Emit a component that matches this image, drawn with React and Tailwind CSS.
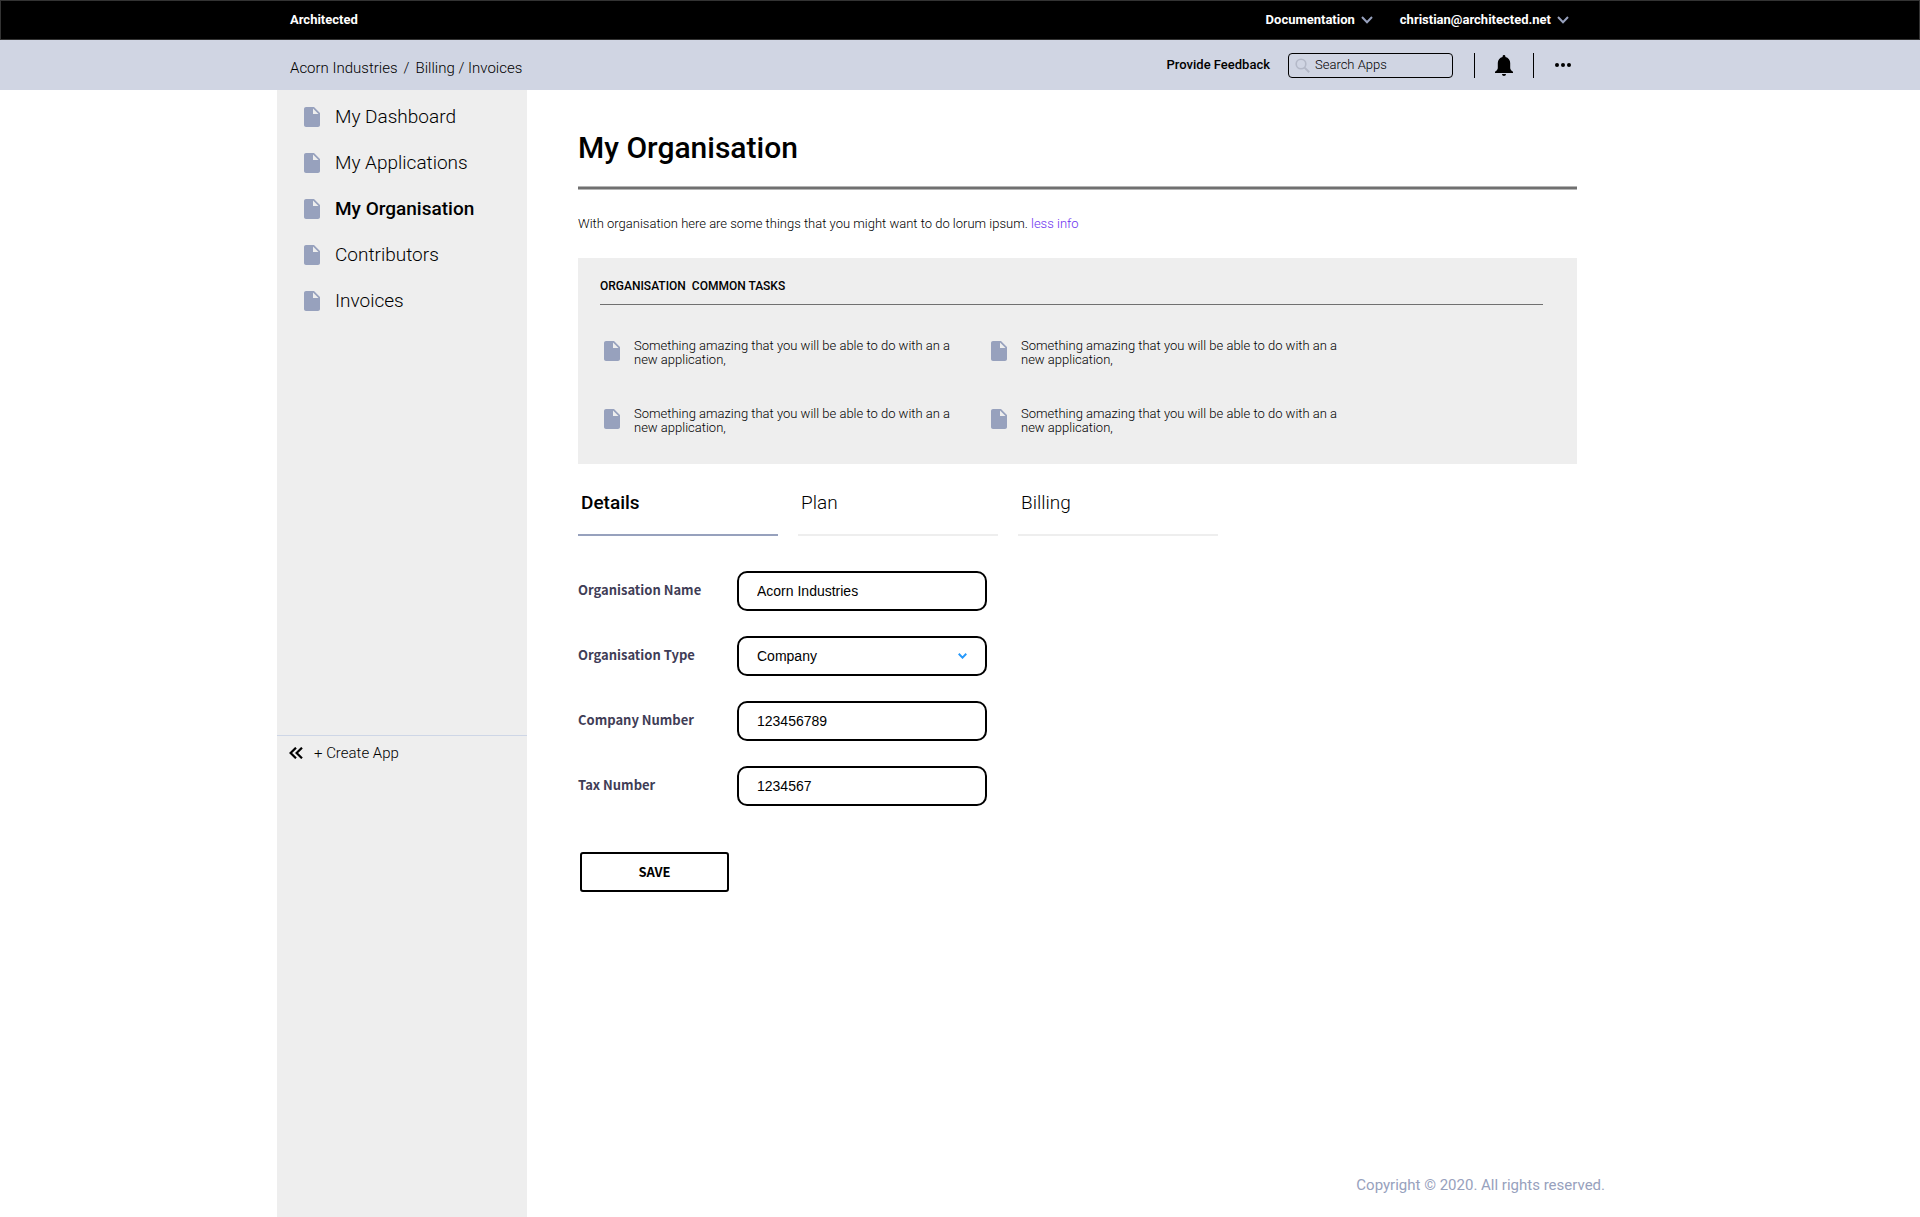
const sidebarLinks = [
  { label: 'My Dashboard' },
  { label: 'My Applications' },
  { label: 'My Organisation', current: true },
  { label: 'Contributors' },
  { label: 'Invoices' },
];

const tasks = [1, 2, 3, 4];

const tabs = [{ label: 'Details', active: true }, { label: 'Plan' }, { label: 'Billing' }];

const inputClass =
  'h-10 w-[250px] rounded-[10px] border-2 border-black bg-white px-[18px] font-["Liberation_Sans",sans-serif] text-sm font-normal text-black';

function FileIcon() {
  return (
    <svg viewBox="4 2 16 20" className="h-5 w-4 shrink-0" fill="#97a1bd" aria-hidden="true">
      <path d="M6 2c-1.1 0-2 .9-2 2v16c0 1.1.9 2 2 2h12c1.1 0 2-.9 2-2V8l-6-6H6zm7 7V3.5L18.5 9H13z" />
    </svg>
  );
}

function Chevron({ className, strokeWidth = 2 }) {
  return (
    <svg viewBox="0 0 12 8" className={className} fill="none" stroke="currentColor" strokeWidth={strokeWidth} aria-hidden="true">
      <path d="M1 1l5 5.2L11 1" />
    </svg>
  );
}

function Field({ id, label, children }) {
  return (
    <div className="flex items-center">
      <label htmlFor={id} className="w-[159px] pb-[2px] font-['Noto_Sans_CJK_SC',sans-serif] text-[13px] leading-5 font-bold text-[#3f3d56]">
        {label}
      </label>
      {children}
    </div>
  );
}

export default function App() {
  return (
    <div className="flex min-h-screen flex-col bg-white font-[Roboto,sans-serif] font-light text-black">
      <header>
        <div className="border border-[#333] bg-black text-white">
          <div className="mx-auto flex h-[38px] max-w-[1366px] items-center justify-between pr-[74px] pl-[13px] text-[13px] font-bold">
            <a href="#home">Architected</a>
            <div className="flex items-center gap-[27px]">
              <button type="button" className="flex items-center gap-[6px]">
                Documentation
                <Chevron className="h-2 w-3 text-[#97a1bd]" />
              </button>
              <button type="button" className="flex items-center gap-[6px]">
                christian@architected.net
                <Chevron className="h-2 w-3 text-[#97a1bd]" />
              </button>
            </div>
          </div>
        </div>
        <div className="bg-[#d0d5e3]">
          <div className="mx-auto flex h-[50px] max-w-[1366px] items-center justify-between pr-[72px] pl-[13px]">
            <nav aria-label="Breadcrumb" className="flex gap-[6px] pt-[6px] text-[15px]">
              <a href="#acorn">Acorn Industries</a>
              <span>/</span>
              <span>
                <a href="#billing">Billing</a> / <a href="#invoices">Invoices</a>
              </span>
            </nav>
            <div className="flex items-center text-[13px]">
              <a href="#feedback" className="mr-[18px] font-medium">
                Provide Feedback
              </a>
              <label className="mr-[21px] flex h-[25px] w-[165px] items-center gap-[5px] rounded-[4px] border border-black pl-[6px]">
                <svg viewBox="0 0 15 15" className="size-[15px] shrink-0" fill="none" stroke="#b4b9c8" strokeWidth="1.6" aria-hidden="true">
                  <circle cx="6" cy="6" r="4.8" />
                  <path d="M9.6 9.6l4.6 4.6" strokeWidth="2" />
                </svg>
                <input type="search" aria-label="Search Apps" placeholder="Search Apps" className="w-full min-w-0 bg-transparent outline-none placeholder:text-black" />
              </label>
              <span className="h-[25px] w-px bg-black" />
              <button type="button" aria-label="Notifications" className="mx-5">
                <svg viewBox="0 0 18 21" className="h-[21px] w-[18px]" aria-hidden="true">
                  <path d="M9 0c.8 0 1.4.6 1.4 1.4v.5c3 .7 4.8 3 4.8 6v5.3c.3 1.6 1.3 2.400 2.800 3.600V18H0v-1.200c1.500-1.200 2.500-2 2.800-3.600V7.900c0-3 1.800-5.300 4.800-6v-.5C7.600.6 8.200 0 9 0zM7 19h4c0 1.100-.9 2-2 2s-2-.9-2-2z" />
                </svg>
              </button>
              <span className="h-[25px] w-px bg-black" />
              <button type="button" aria-label="More" className="ml-[21px]">
                <svg viewBox="0 0 16 4" className="h-1 w-4" aria-hidden="true">
                  <circle cx="2" cy="2" r="2" />
                  <circle cx="8" cy="2" r="2" />
                  <circle cx="14" cy="2" r="2" />
                </svg>
              </button>
            </div>
          </div>
        </div>
      </header>

      <div className="mx-auto flex w-full max-w-[1366px] grow">
        <aside className="w-[250px] shrink-0 bg-[#eeeeee]">
          <nav aria-label="Main" className="min-h-[646px] border-b border-[#ced6e6] pt-1 pl-[27px]">
            {sidebarLinks.map(({ label, current }) => (
              <a
                key={label}
                href="#section"
                aria-current={current ? 'page' : undefined}
                className={`flex h-[46px] items-center gap-[15px] text-[19px] ${current ? 'font-medium' : ''}`}
              >
                <FileIcon />
                {label}
              </a>
            ))}
          </nav>
          <button type="button" className="flex h-[34px] items-center gap-[11px] pl-3 text-[15px]">
            <svg viewBox="0 0 14 12" className="h-3 w-[14px]" fill="none" stroke="black" strokeWidth="2.2" aria-hidden="true">
              <path d="M7 .7L1.600 6 7 11.300M13 .7L7.600 6 13 11.300" />
            </svg>
            + Create App
          </button>
        </aside>

        <div className="flex min-w-0 grow flex-col pr-[38px] pl-[51px]">
          <main className="mr-7 grow pt-10">
            <h1 className="text-[30px] leading-9 font-medium">My Organisation</h1>
            <hr className="mt-5 h-1 border-y border-[#b5b5b5] bg-[#707070]" />
            <p className="mt-6 text-[13px] leading-5">
              With organisation here are some things that you might want to do lorum ipsum.{' '}
              <a href="#less" className="text-[#6a2ff0]">
                less info
              </a>
            </p>

            <section className="mt-6 bg-[#eeeeee] px-[22px] pt-5 pb-[29px]">
              <h2 className="mr-3 border-b border-[#707070] pb-[9px] text-xs leading-[17px] font-medium whitespace-pre">
                ORGANISATION  COMMON TASKS
              </h2>
              <ul className="mt-[34px] grid grid-cols-[387px_387px] gap-y-10">
                {tasks.map((task) => (
                  <li key={task} className="flex items-start gap-[14px] pl-1 text-[13px] leading-[14px]">
                    <span className="pt-[2px]">
                      <FileIcon />
                    </span>
                    <span className="w-[330px]">Something amazing that you will be able to do with an a new application,</span>
                  </li>
                ))}
              </ul>
            </section>

            <div role="tablist" className="mt-6 flex gap-5">
              {tabs.map(({ label, active }) => (
                <button
                  key={label}
                  type="button"
                  role="tab"
                  aria-selected={!!active}
                  className={`w-[200px] border-b-2 px-[3px] pt-[3px] pb-[19px] text-left text-[19px] leading-6 ${
                    active ? 'border-[#97a1bd] font-medium' : 'border-[#eeeeee]'
                  }`}
                >
                  {label}
                </button>
              ))}
            </div>

            <form className="mt-[35px] flex flex-col items-start gap-[25px]">
              <Field id="org-name" label="Organisation Name">
                <input id="org-name" defaultValue="Acorn Industries" className={inputClass} />
              </Field>
              <Field id="org-type" label="Organisation Type">
                <div className="relative">
                  <select id="org-type" className={`${inputClass} appearance-none`}>
                    <option>Company</option>
                  </select>
                  <Chevron strokeWidth={2.6} className="pointer-events-none absolute top-[17px] right-5 h-[6px] w-[9px] text-[#2699fb]" />
                </div>
              </Field>
              <Field id="company-number" label="Company Number">
                <input id="company-number" defaultValue="123456789" className={inputClass} />
              </Field>
              <Field id="tax-number" label="Tax Number">
                <input id="tax-number" defaultValue="1234567" className={inputClass} />
              </Field>
              <button type="button" className="mt-[21px] ml-[2px] h-10 w-[149px] rounded-[3px] border-2 border-black bg-white font-['Noto_Sans_CJK_SC',sans-serif] text-[13px] font-bold">
                SAVE
              </button>
            </form>
          </main>
          <footer className="pb-[22px] text-right text-[15px] leading-5 font-normal text-[#97a1bd]">Copyright © 2020. All rights reserved.</footer>
        </div>
      </div>
    </div>
  );
}
